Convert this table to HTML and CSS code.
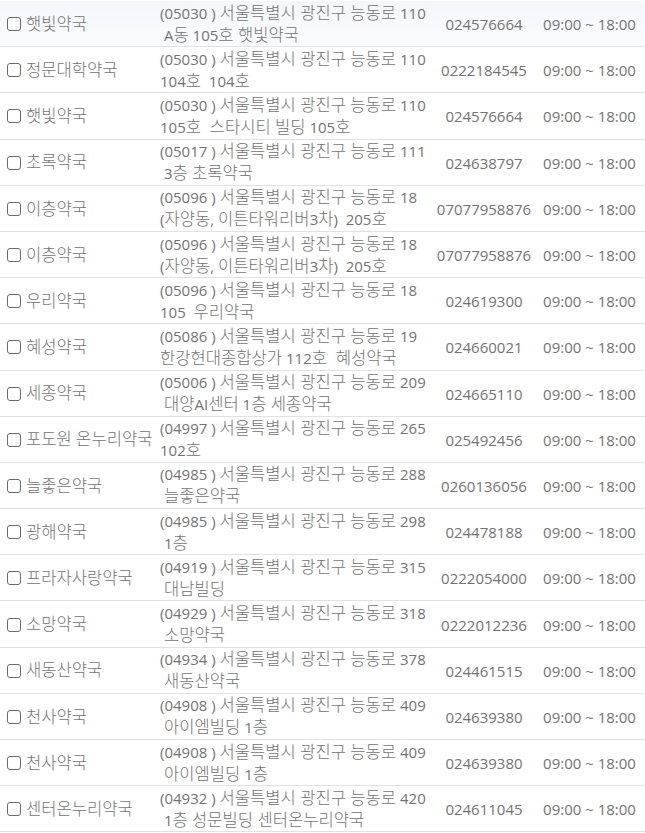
FILE: index.html
```html
<!DOCTYPE html>
<html lang="ko">
<head>
<meta charset="utf-8">
<link rel="stylesheet" href="styles.css">
</head>
<body>
<div class="list">
  <div class="row hover"><div class="name"><span class="cb"></span><span class="k">햇빛약국</span></div><div class="addr">(05030 ) <span class="k">서울특별시 광진구 능동로</span> 110<br> A<span class="k">동</span> 105<span class="k">호 햇빛약국</span></div><div class="tel">024576664</div><div class="hours">09:00 ~ 18:00</div></div>
  <div class="row"><div class="name"><span class="cb"></span><span class="k">정문대학약국</span></div><div class="addr">(05030 ) <span class="k">서울특별시 광진구 능동로</span> 110<br>104<span class="k">호</span>  104<span class="k">호</span></div><div class="tel">0222184545</div><div class="hours">09:00 ~ 18:00</div></div>
  <div class="row"><div class="name"><span class="cb"></span><span class="k">햇빛약국</span></div><div class="addr">(05030 ) <span class="k">서울특별시 광진구 능동로</span> 110<br>105<span class="k">호  스타시티 빌딩</span> 105<span class="k">호</span></div><div class="tel">024576664</div><div class="hours">09:00 ~ 18:00</div></div>
  <div class="row"><div class="name"><span class="cb"></span><span class="k">초록약국</span></div><div class="addr">(05017 ) <span class="k">서울특별시 광진구 능동로</span> 111<br> 3<span class="k">층 초록약국</span></div><div class="tel">024638797</div><div class="hours">09:00 ~ 18:00</div></div>
  <div class="row"><div class="name"><span class="cb"></span><span class="k">이층약국</span></div><div class="addr">(05096 ) <span class="k">서울특별시 광진구 능동로</span> 18<br>(<span class="k">자양동</span>, <span class="k">이튼타워리버</span>3<span class="k">차</span>)  205<span class="k">호</span></div><div class="tel">07077958876</div><div class="hours">09:00 ~ 18:00</div></div>
  <div class="row"><div class="name"><span class="cb"></span><span class="k">이층약국</span></div><div class="addr">(05096 ) <span class="k">서울특별시 광진구 능동로</span> 18<br>(<span class="k">자양동</span>, <span class="k">이튼타워리버</span>3<span class="k">차</span>)  205<span class="k">호</span></div><div class="tel">07077958876</div><div class="hours">09:00 ~ 18:00</div></div>
  <div class="row"><div class="name"><span class="cb"></span><span class="k">우리약국</span></div><div class="addr">(05096 ) <span class="k">서울특별시 광진구 능동로</span> 18<br>105  <span class="k">우리약국</span></div><div class="tel">024619300</div><div class="hours">09:00 ~ 18:00</div></div>
  <div class="row"><div class="name"><span class="cb"></span><span class="k">혜성약국</span></div><div class="addr">(05086 ) <span class="k">서울특별시 광진구 능동로</span> 19<br><span class="k">한강현대종합상가</span> 112<span class="k">호  혜성약국</span></div><div class="tel">024660021</div><div class="hours">09:00 ~ 18:00</div></div>
  <div class="row"><div class="name"><span class="cb"></span><span class="k">세종약국</span></div><div class="addr">(05006 ) <span class="k">서울특별시 광진구 능동로</span> 209<br> <span class="k">대양</span>AI<span class="k">센터</span> 1<span class="k">층 세종약국</span></div><div class="tel">024665110</div><div class="hours">09:00 ~ 18:00</div></div>
  <div class="row"><div class="name"><span class="cb"></span><span class="k">포도원 온누리약국</span></div><div class="addr">(04997 ) <span class="k">서울특별시 광진구 능동로</span> 265<br>102<span class="k">호</span></div><div class="tel">025492456</div><div class="hours">09:00 ~ 18:00</div></div>
  <div class="row"><div class="name"><span class="cb"></span><span class="k">늘좋은약국</span></div><div class="addr">(04985 ) <span class="k">서울특별시 광진구 능동로</span> 288<br> <span class="k">늘좋은약국</span></div><div class="tel">0260136056</div><div class="hours">09:00 ~ 18:00</div></div>
  <div class="row"><div class="name"><span class="cb"></span><span class="k">광해약국</span></div><div class="addr">(04985 ) <span class="k">서울특별시 광진구 능동로</span> 298<br> 1<span class="k">층</span></div><div class="tel">024478188</div><div class="hours">09:00 ~ 18:00</div></div>
  <div class="row"><div class="name"><span class="cb"></span><span class="k">프라자사랑약국</span></div><div class="addr">(04919 ) <span class="k">서울특별시 광진구 능동로</span> 315<br> <span class="k">대남빌딩</span></div><div class="tel">0222054000</div><div class="hours">09:00 ~ 18:00</div></div>
  <div class="row"><div class="name"><span class="cb"></span><span class="k">소망약국</span></div><div class="addr">(04929 ) <span class="k">서울특별시 광진구 능동로</span> 318<br> <span class="k">소망약국</span></div><div class="tel">0222012236</div><div class="hours">09:00 ~ 18:00</div></div>
  <div class="row"><div class="name"><span class="cb"></span><span class="k">새동산약국</span></div><div class="addr">(04934 ) <span class="k">서울특별시 광진구 능동로</span> 378<br> <span class="k">새동산약국</span></div><div class="tel">024461515</div><div class="hours">09:00 ~ 18:00</div></div>
  <div class="row"><div class="name"><span class="cb"></span><span class="k">천사약국</span></div><div class="addr">(04908 ) <span class="k">서울특별시 광진구 능동로</span> 409<br> <span class="k">아이엠빌딩</span> 1<span class="k">층</span></div><div class="tel">024639380</div><div class="hours">09:00 ~ 18:00</div></div>
  <div class="row"><div class="name"><span class="cb"></span><span class="k">천사약국</span></div><div class="addr">(04908 ) <span class="k">서울특별시 광진구 능동로</span> 409<br> <span class="k">아이엠빌딩</span> 1<span class="k">층</span></div><div class="tel">024639380</div><div class="hours">09:00 ~ 18:00</div></div>
  <div class="row"><div class="name"><span class="cb"></span><span class="k">센터온누리약국</span></div><div class="addr">(04932 ) <span class="k">서울특별시 광진구 능동로</span> 420<br> 1<span class="k">층 성문빌딩 센터온누리약국</span></div><div class="tel">024611045</div><div class="hours">09:00 ~ 18:00</div></div>
</div>
</body>
</html>
```

FILE: styles.css
```css
html, body {
  margin: 0;
  padding: 0;
  background: #fff;
}
body {
  font-family: "Open Sans", "Noto Sans CJK KR", sans-serif;
  font-size: 15px;
  color: #737373;
  overflow: hidden;
}
.list {
  padding-top: 1px;
}
.row {
  display: grid;
  grid-template-columns: 158px 276px 100px 111px;
  align-items: center;
  height: 45.2px;
  border-bottom: 1px solid #e2e2e2;
}
.row.hover {
  background: linear-gradient(#f3f6fc, #fafbfe);
}
.name, .addr, .tel, .hours {
  line-height: 22px;
}
.name, .tel, .hours {
  padding-top: 1px;
}
.k {
  font-size: 16.6px;
  font-weight: 300;
  line-height: 1;
}
.name {
  display: flex;
  align-items: center;
  padding-left: 7px;
  white-space: nowrap;
}
.cb {
  width: 12px;
  height: 12px;
  border: 1px solid #6a6a6a;
  border-radius: 3px;
  background: #fff;
  margin-right: 5px;
  flex: none;
}
.addr {
  padding-left: 2px;
  white-space: pre;
}
.tel, .hours {
  text-align: center;
  white-space: nowrap;
}
```
